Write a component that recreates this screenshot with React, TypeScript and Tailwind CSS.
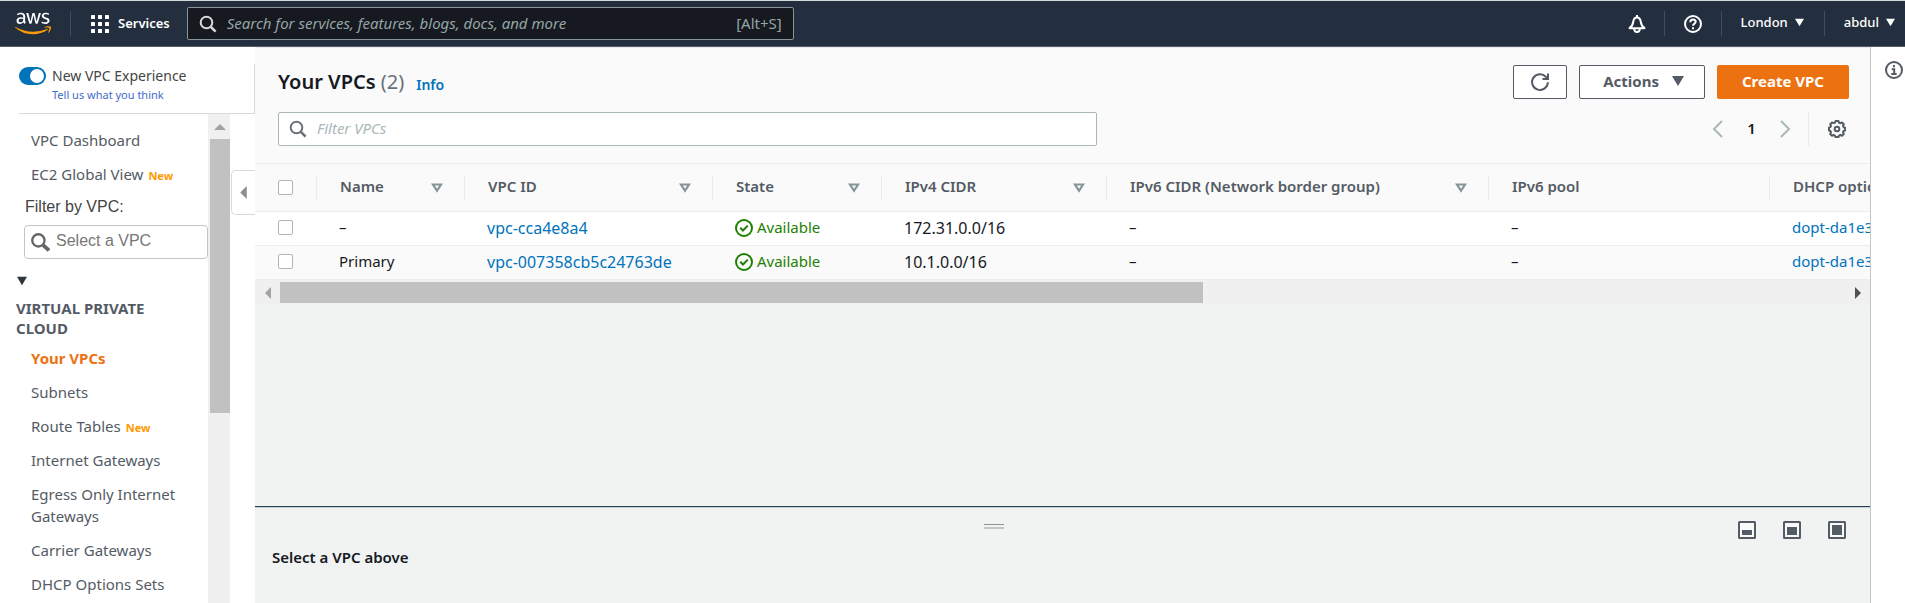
import { useState } from 'react';
import type { ReactNode } from 'react';
import { FaAws } from 'react-icons/fa';

function Triangle({ className, d }: { className: string; d: string }) {
  return (
    <svg viewBox="0 0 12 12" className={className} fill="currentColor" aria-hidden="true">
      <path d={d} />
    </svg>
  );
}

const DOWN = 'M0 1h12L6 11z';
const LEFT = 'M9 0v12L3 6z';
const RIGHT = 'M3 0v12l6-6z';
const UP = 'M0 9h12L6 3z';

function SortTriangle() {
  return (
    <svg viewBox="0 0 12 10" className="h-[10px] w-3 shrink-0" fill="none" stroke="#879596" strokeWidth="2.200" aria-hidden="true">
      <path d="M2 1.500h8L6 7.800z" />
    </svg>
  );
}

function LineIcon({ className, children }: { className: string; children: ReactNode }) {
  return (
    <svg viewBox="0 0 18 18" className={className} fill="none" stroke="currentColor" strokeWidth="2" aria-hidden="true">
      {children}
    </svg>
  );
}

function SearchIcon({ className }: { className: string }) {
  return (
    <LineIcon className={className}>
      <circle cx="7.5" cy="7.5" r="5.8" />
      <path d="M11.6 11.6l5 5" strokeWidth="2.6" />
    </LineIcon>
  );
}

function BellIcon() {
  return (
    <LineIcon className="size-[18px]">
      <path d="M1.500 13.200h15C14 11.500 13.200 10 12.800 7 12.400 4 11 2.600 9 2.600S5.600 4 5.200 7C4.800 10 4 11.500 1.500 13.200z" strokeLinejoin="round" />
      <path d="M9 0v3M6.300 14c0 4 5.400 4 5.400 0" />
    </LineIcon>
  );
}

function HelpIcon() {
  return (
    <LineIcon className="size-[18px]">
      <circle cx="9" cy="9" r="8" />
      <path d="M6.300 7.200c0-3.600 5.400-3.400 5.400-.4 0 1.800-2.700 1.900-2.700 4" />
      <path d="M9 12.200v2" />
    </LineIcon>
  );
}

function InfoIcon() {
  return (
    <LineIcon className="size-[18px]">
      <circle cx="9" cy="9" r="8" />
      <path d="M9 4v2.200M6.700 8.300H9.200v4.500M6.300 13h5.400" />
    </LineIcon>
  );
}

function RefreshIcon() {
  return (
    <LineIcon className="size-[18px]">
      <path d="M16.900 9.200A7.900 7.900 0 1 1 14.800 3.700L16.500 5.300" />
      <path d="M11.500 6H17V0.500" />
    </LineIcon>
  );
}

function GearIcon() {
  return (
    <LineIcon className="size-[18px]">
      <circle cx="9" cy="9" r="2.300" />
      <path
        d="M7.500 1h3l.5 1.600 1.500.6 1.500-.8 1.800 1.800-.8 1.600.6 1.400 1.500.4v2.900l-1.500.5-.6 1.400.8 1.600-1.800 1.800-1.600-.8-1.400.6-.5 1.500H7.500L7 15.600 5.600 15l-1.600.8L2.200 14l.8-1.600-.6-1.400L1 10.500V7.600l1.400-.5L3 5.700 2.200 4.200 4 2.400l1.600.8L7 2.600z"
        strokeLinejoin="round"
      />
    </LineIcon>
  );
}

function CheckIcon() {
  return (
    <LineIcon className="size-[18px] shrink-0">
      <circle cx="9" cy="9" r="8" />
      <path d="M5.200 8.800l2.700 2.700 4.900-4.900" />
    </LineIcon>
  );
}

function PanelIcon({ top }: { top: number }) {
  return (
    <svg viewBox="0 0 18 18" className="size-[18px]" aria-hidden="true">
      <rect x="1" y="1" width="16" height="16" rx="0.500" fill="#f8f9f9" stroke="#545b64" strokeWidth="2" />
      <rect x="4" y={top} width="10" height={14 - top} fill="#545b64" />
    </svg>
  );
}

function NavDivider() {
  return <span className="h-[25px] w-px bg-[#414d5c]" />;
}

function Header() {
  return (
    <header className="flex h-[47px] shrink-0 items-center border-t border-b border-t-[#d5dbdb] border-b-[#545b64] bg-[#232f3e] pl-[15px] text-white">
      <svg className="absolute size-0" aria-hidden="true">
        <linearGradient id="brand" x1="0" y1="0" x2="0" y2="1">
          <stop offset="0.620" stopColor="#fff" />
          <stop offset="0.620" stopColor="#ff9900" />
        </linearGradient>
      </svg>
      <a href="#home" aria-label="AWS home">
        <FaAws fill="url(#brand)" className="h-[29px] w-9" />
      </a>
      <span className="ml-[19px] flex items-center">
        <NavDivider />
      </span>
      <button type="button" className="ml-5 flex items-center gap-[9px] text-[13px] font-semibold">
        <svg viewBox="0 0 18 18" className="size-[18px]" fill="currentColor" aria-hidden="true">
          {[0, 7, 14].map((y) => [0, 7, 14].map((x) => <rect key={`${x}-${y}`} x={x} y={y} width="4" height="4" rx="0.500" />))}
        </svg>
        Services
      </button>
      <label className="ml-[17px] flex h-[33px] w-[607px] items-center rounded-[2px] border border-[#879596] bg-[#16191f] px-[11px]">
        <SearchIcon className="size-[18px] shrink-0 text-[#d5dbdb]" />
        <input
          type="search"
          aria-label="Search"
          placeholder="Search for services, features, blogs, docs, and more"
          className="ml-[10px] min-w-0 grow bg-transparent text-[15px] italic outline-none placeholder:text-[#95a5a6]"
        />
        <span className="text-[15px] text-[#95a5a6]">[Alt+S]</span>
      </label>
      <nav className="ml-auto flex items-center pr-[10px] text-[13px] font-medium">
        <button type="button" aria-label="Notifications" className="px-[18px]">
          <BellIcon />
        </button>
        <NavDivider />
        <button type="button" aria-label="Help" className="px-[19px]">
          <HelpIcon />
        </button>
        <NavDivider />
        <button type="button" className="flex items-center gap-[7px] pb-[2px] pr-5 pl-[19px]">
          London
          <Triangle className="size-[9px]" d={DOWN} />
        </button>
        <NavDivider />
        <button type="button" className="flex items-center gap-[7px] pb-[2px] pl-[19px]">
          abdul
          <Triangle className="size-[9px]" d={DOWN} />
        </button>
      </nav>
    </header>
  );
}

function NavItem({ children, isNew, active }: { children: ReactNode; isNew?: boolean; active?: boolean }) {
  return (
    <li className="py-[6px] pr-6 pl-[31px]">
      <a href="#nav" className={active ? 'font-bold text-[#ec7211]' : 'text-[#545b64]'}>
        {children}
      </a>
      {isNew && <span className="ml-[5px] text-[11px] leading-none font-bold text-[#ff9900]">New</span>}
    </li>
  );
}

function Sidebar() {
  const [on, setOn] = useState(true);
  return (
    <aside className="relative flex w-[255px] shrink-0 flex-col bg-white">
      <div className="mt-[17px] ml-[19px] flex h-[50px] shrink-0 gap-[6px] border-r border-b border-[#d5dbdb]">
        <input id="experience" type="checkbox" role="switch" checked={on} onChange={() => setOn(!on)} className="peer sr-only" />
        <label
          htmlFor="experience"
          className="mt-[3px] flex h-[18px] w-[27px] items-center justify-start rounded-full bg-[#879596] p-[2px] peer-checked:justify-end peer-checked:bg-[#0073bb]"
        >
          <span className="size-[14px] rounded-full bg-white" />
        </label>
        <div>
          <label htmlFor="experience" className="block text-[14px] leading-[23px] text-[#444]">
            New VPC Experience
          </label>
          <a href="#feedback" className="block text-[11px] leading-4 text-[#3f6ac8]">
            Tell us what you think
          </a>
        </div>
      </div>
      <div className="flex min-h-0 grow">
        <nav className="w-[208px] shrink-0 overflow-hidden pt-[9px] text-[15px] leading-[22px]">
          <ul>
            <NavItem>VPC Dashboard</NavItem>
            <NavItem isNew>EC2 Global View</NavItem>
          </ul>
          <label htmlFor="vpc-filter" className="block pt-[5px] pb-[7px] pl-[25px] font-['Liberation_Sans',Arial,sans-serif] text-[16px] text-[#444]">
            Filter by VPC:
          </label>
          <div className="ml-6 flex h-[34px] items-center rounded-[4px] border border-[#c4c4c4] pl-[6px] text-[#666]">
            <svg viewBox="0 0 18 18" className="size-[19px] shrink-0" fill="none" stroke="currentColor" aria-hidden="true">
              <circle cx="7" cy="7" r="5.800" strokeWidth="2.200" />
              <path d="M11.500 11.500l5.500 5" strokeWidth="3.600" />
            </svg>
            <input
              id="vpc-filter"
              type="text"
              placeholder="Select a VPC"
              className="ml-[6px] w-full min-w-0 bg-transparent pb-[3px] font-['Liberation_Sans',Arial,sans-serif] text-[16px] outline-none placeholder:text-[#777]"
            />
          </div>
          <button type="button" aria-label="Collapse section" className="flex h-[39px] items-center pt-1 pl-4 text-[#2f363d]">
            <Triangle className="h-[10px] w-3" d={DOWN} />
          </button>
          <h2 className="pr-12 pb-[3px] pl-4 leading-5 font-bold text-[#545b64]">VIRTUAL PRIVATE CLOUD</h2>
          <ul>
            <NavItem active>Your VPCs</NavItem>
            <NavItem>Subnets</NavItem>
            <NavItem isNew>Route Tables</NavItem>
            <NavItem>Internet Gateways</NavItem>
            <NavItem>Egress Only Internet Gateways</NavItem>
            <NavItem>Carrier Gateways</NavItem>
            <NavItem>DHCP Options Sets</NavItem>
          </ul>
        </nav>
        <div className="flex w-[22px] flex-col items-end bg-[#f0f0f0]">
          <span className="flex h-[25px] w-5 items-center justify-center text-[#a3a3a3]">
            <Triangle className="size-3" d={UP} />
          </span>
          <span className="h-[56%] w-5 bg-[#c1c1c1]" />
        </div>
      </div>
      <button
        type="button"
        aria-label="Collapse navigation"
        className="absolute top-[123px] right-0 flex h-[45px] w-6 items-center justify-center rounded-l-[5px] border border-r-0 border-[#d5dbdb] bg-white text-[#8d8d8d]"
      >
        <Triangle className="size-[13px]" d={LEFT} />
      </button>
    </aside>
  );
}

const COLUMNS = [
  { label: 'Name', col: 'w-[148px]', sortable: true },
  { label: 'VPC ID', col: 'w-[248px]', sortable: true },
  { label: 'State', col: 'w-[169px]', sortable: true },
  { label: 'IPv4 CIDR', col: 'w-[225px]', sortable: true },
  { label: 'IPv6 CIDR (Network border group)', col: 'w-[382px]', sortable: true },
  { label: 'IPv6 pool', col: 'w-[281px]', sortable: false },
  { label: 'DHCP options set', col: 'w-[240px]', sortable: true },
];

const VPCS = [
  { name: '–', id: 'vpc-cca4e8a4', cidr: '172.31.0.0/16', dhcp: 'dopt-da1e3' },
  { name: 'Primary', id: 'vpc-007358cb5c24763de', cidr: '10.1.0.0/16', dhcp: 'dopt-da1e3' },
];

const CELL = 'border-b border-[#eaeded] p-0 pb-[2px] pl-[22px]';

function Tick({ label }: { label: string }) {
  return (
    <input
      type="checkbox"
      aria-label={label}
      className="block size-[15px] appearance-none rounded-[2px] border border-[#aab7b8] bg-white checked:bg-[#0073bb]"
    />
  );
}

function VpcTable() {
  return (
    <div className="shrink-0">
      <div className="overflow-hidden">
        <table className="w-max table-fixed border-separate border-spacing-0 text-left whitespace-nowrap">
          <colgroup>
            <col className="w-[62px]" />
            {COLUMNS.map((c) => (
              <col key={c.label} className={c.col} />
            ))}
          </colgroup>
          <thead className="bg-[#fafafa] text-[15px] text-[#545b64]">
            <tr className="h-12">
              <th className="border-b border-[#eaeded] p-0 pl-[23px]">
                <div className="flex items-center justify-between">
                  <Tick label="Select all VPCs" />
                  <span className="h-6 w-px bg-[#eaeded]" />
                </div>
              </th>
              {COLUMNS.map((c) => (
                <th key={c.label} className="border-b border-[#eaeded] p-0 pl-[23px] font-semibold">
                  <div className="flex items-center">
                    <span className="grow pb-[2px]">{c.label}</span>
                    {c.sortable && <SortTriangle />}
                    <span className="ml-[21px] h-6 w-px bg-[#eaeded]" />
                  </div>
                </th>
              ))}
            </tr>
          </thead>
          <tbody className="text-[15px] text-[#16191f]">
            {VPCS.map((v) => (
              <tr key={v.id} className="h-[34px] bg-white even:bg-[#fafafa]">
                <td className="border-b border-[#eaeded] p-0 pb-[2px] pl-[23px]">
                  <Tick label={`Select ${v.id}`} />
                </td>
                <td className={CELL}>{v.name}</td>
                <td className={CELL}>
                  <a href="#vpc" className="text-[16px] text-[#0073bb]">
                    {v.id}
                  </a>
                </td>
                <td className={CELL}>
                  <span className="flex items-center gap-1 text-[#1d8102]">
                    <CheckIcon />
                    Available
                  </span>
                </td>
                <td className={CELL}>
                  <span className="text-[16px]">{v.cidr}</span>
                </td>
                <td className={CELL}>–</td>
                <td className={CELL}>–</td>
                <td className={CELL}>
                  <a href="#dhcp" className="text-[#0073bb]">
                    {v.dhcp}
                  </a>
                </td>
              </tr>
            ))}
          </tbody>
        </table>
      </div>
      <div className="flex h-[25px] items-center bg-[#f0f0f0]">
        <span className="flex w-[25px] justify-center text-[#a3a3a3]">
          <Triangle className="size-3" d={LEFT} />
        </span>
        <span className="flex h-[21px] grow">
          <span className="w-[59%] bg-[#c1c1c1]" />
        </span>
        <span className="flex w-[25px] justify-center text-[#505050]">
          <Triangle className="size-3" d={RIGHT} />
        </span>
      </div>
    </div>
  );
}

function Toolbar() {
  return (
    <div className="shrink-0 border-t border-b border-[#eaeded] bg-[#fafafa] pt-[17px] pr-[21px] pb-[17px] pl-[23px]">
      <div className="flex h-[34px] items-center">
        <h1 className="text-[20px] font-semibold text-[#16191f]">
          Your VPCs <span className="font-normal text-[#687078]">(2)</span>
        </h1>
        <a href="#info" className="mt-1 ml-3 text-[14px] font-semibold text-[#0073bb]">
          Info
        </a>
        <div className="ml-auto flex gap-3 text-[15px] font-bold text-[#545b64]">
          <button type="button" aria-label="Refresh" className="flex h-[34px] w-[54px] items-center justify-center rounded-[2px] border border-[#545b64] bg-white">
            <RefreshIcon />
          </button>
          <button type="button" className="flex h-[34px] items-center gap-[13px] rounded-[2px] border border-[#545b64] bg-white pr-5 pb-[2px] pl-[23px]">
            Actions
            <Triangle className="size-3" d={DOWN} />
          </button>
          <button type="button" className="h-[34px] rounded-[2px] bg-[#ec7211] px-[25px] pb-[2px] text-white">
            Create VPC
          </button>
        </div>
      </div>
      <div className="mt-[13px] flex h-[34px] items-center">
        <label className="flex h-[34px] w-[819px] max-w-[60%] items-center rounded-[2px] border border-[#aab7b8] bg-white px-[10px]">
          <SearchIcon className="size-[18px] shrink-0 text-[#687078]" />
          <input
            type="search"
            aria-label="Filter VPCs"
            placeholder="Filter VPCs"
            className="ml-[10px] grow bg-transparent pb-[2px] text-[15px] italic outline-none placeholder:text-[#aab7b8]"
          />
        </label>
        <div className="ml-auto flex items-center">
          <button type="button" aria-label="Previous page" className="text-[#aab7b8]">
            <LineIcon className="size-[18px]">
              <path d="M13 1L5 9l8 8" />
            </LineIcon>
          </button>
          <span className="w-[49px] pb-[2px] text-center text-[15px] font-semibold text-[#16191f]">1</span>
          <button type="button" aria-label="Next page" className="text-[#aab7b8]">
            <LineIcon className="size-[18px]">
              <path d="M5 1l8 8-8 8" />
            </LineIcon>
          </button>
          <span className="mr-[19px] ml-[14px] h-[34px] w-px bg-[#eaeded]" />
          <button type="button" aria-label="Preferences" className="mr-[3px] text-[#545b64]">
            <GearIcon />
          </button>
        </div>
      </div>
    </div>
  );
}

function SplitPanel() {
  return (
    <section className="h-[97px] shrink-0 border-t border-[#2b3e4f] px-[17px] shadow-[inset_0_1px_0_#c8d0d4]">
      <div className="grid grid-cols-[11fr_auto_13fr] items-start pt-[14px] pr-[7px]">
        <span />
        <span className="mt-[3px] flex h-[5px] w-5 flex-col justify-between">
          <span className="h-px bg-[#8f9494]" />
          <span className="h-[2px] bg-[#c4c6c6]" />
        </span>
        <div className="flex justify-end gap-[27px]">
          <button type="button" aria-label="Small panel">
            <PanelIcon top={9} />
          </button>
          <button type="button" aria-label="Medium panel">
            <PanelIcon top={6} />
          </button>
          <button type="button" aria-label="Full panel">
            <PanelIcon top={4} />
          </button>
        </div>
      </div>
      <h2 className="mt-2 text-[15px] leading-5 font-semibold text-[#16191f]">Select a VPC above</h2>
    </section>
  );
}

export default function App() {
  return (
    <div className="flex h-screen flex-col overflow-hidden bg-white font-['Noto_Sans',sans-serif]">
      <Header />
      <div className="flex min-h-0 grow">
        <Sidebar />
        <main className="flex min-w-0 grow flex-col bg-[#f1f3f3]">
          <Toolbar />
          <VpcTable />
          <div className="grow" />
          <SplitPanel />
        </main>
        <aside className="flex w-[35px] shrink-0 justify-end border-l border-[#c4c8c8] bg-white pt-[14px] pr-[2px] text-[#545b64]">
          <button type="button" aria-label="Open information panel" className="h-[18px]">
            <InfoIcon />
          </button>
        </aside>
      </div>
    </div>
  );
}
